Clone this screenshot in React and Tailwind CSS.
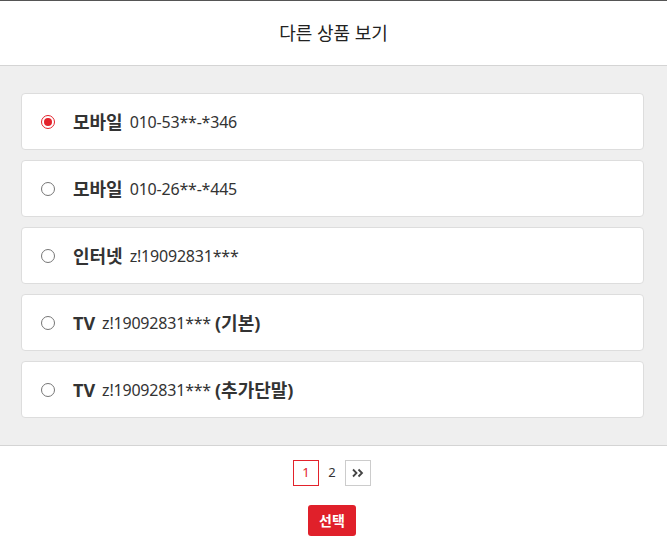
import React, { useState } from "react";

const products = [
  { id: 1, type: "모바일", number: "010-53**-*346" },
  { id: 2, type: "모바일", number: "010-26**-*445" },
  { id: 3, type: "인터넷", number: "z!19092831***" },
  { id: 4, type: "TV", number: "z!19092831***", note: "(기본)" },
  { id: 5, type: "TV", number: "z!19092831***", note: "(추가단말)" },
];

function Radio({ checked }) {
  if (checked) {
    return (
      <span className="flex h-[14px] w-[14px] items-center justify-center rounded-full border-[1.5px] border-[#e3222b] bg-white">
        <span className="h-[8px] w-[8px] rounded-full bg-[#e3222b]" />
      </span>
    );
  }
  return <span className="h-[14px] w-[14px] rounded-full border border-[#767676] bg-white" />;
}

export default function App() {
  const [selected, setSelected] = useState(1);

  return (
    <div
      className="flex h-[558px] w-[667px] flex-col bg-white text-[#333]"
      style={{ fontFamily: '"Noto Sans", "Noto Sans CJK KR", sans-serif' }}
    >
      <div className="h-px bg-[#555]" />
      <header className="flex h-[65px] items-center justify-center border-b border-[#d4d4d4]">
        <h1 className="text-[18px] font-normal text-[#222]">다른 상품 보기</h1>
      </header>

      <div className="flex flex-col gap-[10px] border-b border-[#d4d4d4] bg-[#efefef] pb-[27px] pl-[21px] pr-[23px] pt-[27px]">
        {products.map((p) => (
          <label
            key={p.id}
            onClick={() => setSelected(p.id)}
            className="flex h-[57px] cursor-pointer items-center rounded-[4px] border border-[#dddddd] bg-white pl-[19px]"
          >
            <Radio checked={selected === p.id} />
            <span className="ml-[18px] text-[18px] font-bold leading-none text-[#333]">{p.type}</span>
            <span className="ml-[7px] text-[16px] leading-none tracking-[-0.2px] text-[#333]">{p.number}</span>
            {p.note && (
              <span className="ml-[4px] text-[18px] font-bold leading-none text-[#333]">{p.note}</span>
            )}
          </label>
        ))}
      </div>

      <div className="flex flex-col items-center pr-[3px] pt-[14px]">
        <div className="flex items-center">
          <span className="flex h-[26px] w-[26px] items-center justify-center border border-[#e3222b] text-[13px] text-[#e3222b]">
            1
          </span>
          <span className="flex h-[26px] w-[26px] items-center justify-center text-[13px] text-[#333]">2</span>
          <span className="flex h-[26px] w-[26px] items-center justify-center border border-[#cccccc]">
            <svg width="12" height="10" viewBox="0 0 12 10" fill="none" stroke="#444" strokeWidth="1.8">
              <path d="M1 1.5 L4.5 5 L1 8.5" />
              <path d="M6.5 1.5 L10 5 L6.5 8.5" />
            </svg>
          </span>
        </div>
        <button className="mt-[19px] h-[31px] w-[48px] rounded-[3px] bg-[#e0202a] text-[14px] font-bold text-white">
          선택
        </button>
      </div>
    </div>
  );
}
